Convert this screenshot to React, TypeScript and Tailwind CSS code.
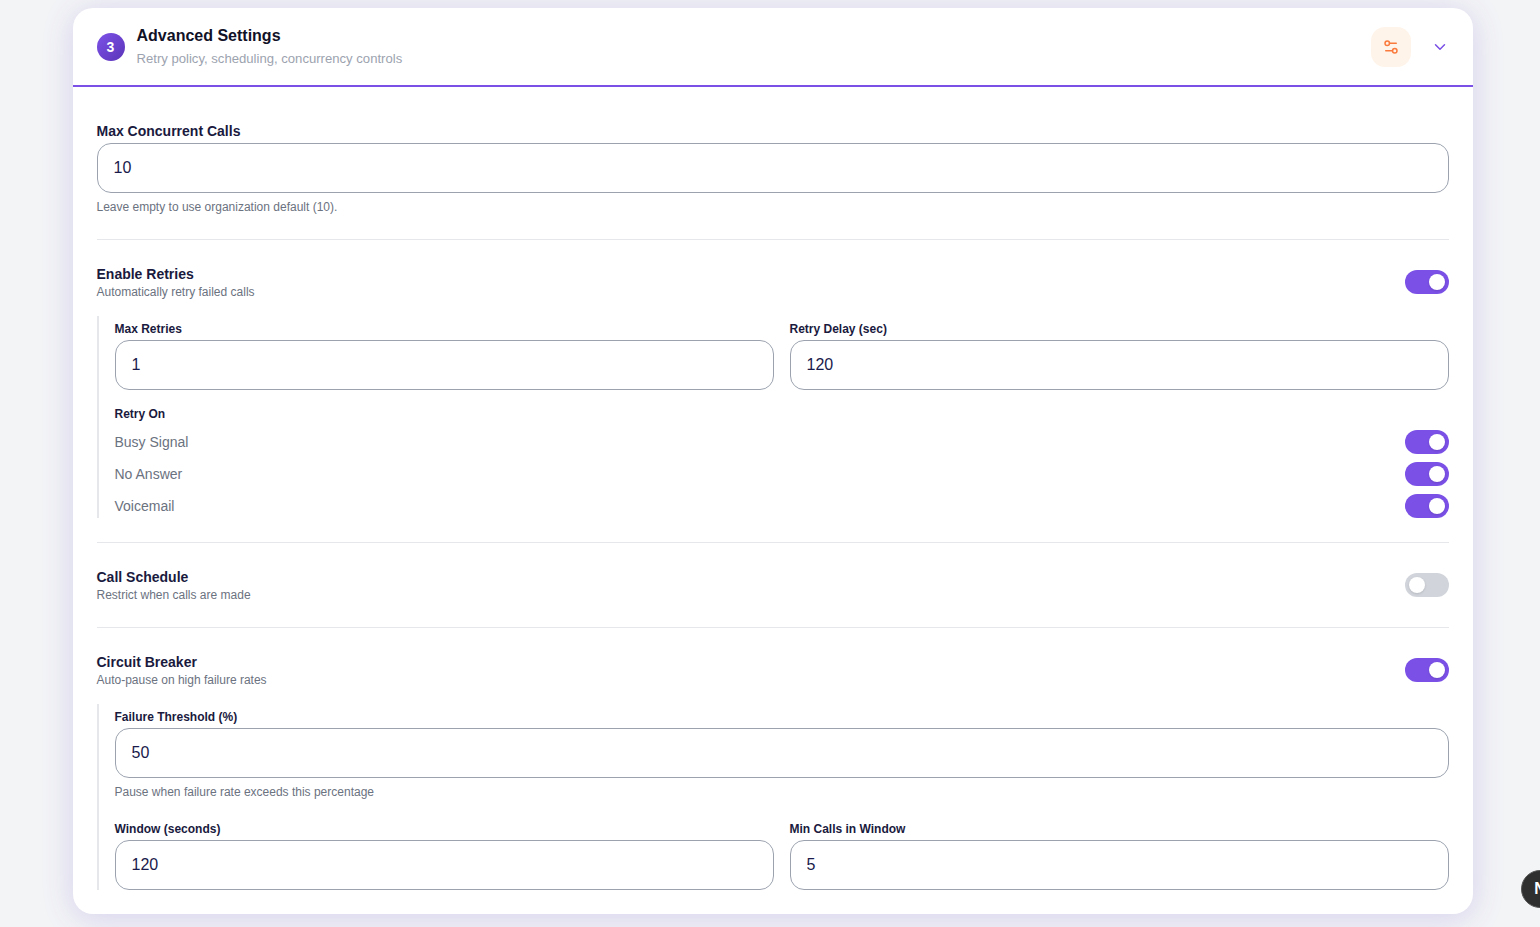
import { ChevronDown, Settings2 } from "lucide-react"

function Toggle({ on = true }: { on?: boolean }) {
  return (
    <button
      type="button"
      className={`flex h-6 w-11 shrink-0 items-center rounded-full px-1 ${on ? "justify-end bg-[#7a50e6]" : "justify-start bg-[#d1d5db]"}`}
    >
      <span className="h-4 w-4 rounded-full bg-white shadow-sm" />
    </button>
  )
}

function NumberInput({ value }: { value: string }) {
  return (
    <input
      defaultValue={value}
      className="block h-[50px] w-full rounded-[14px] border border-[#9ca3af] bg-white px-4 text-base text-[#1a1a4b] outline-none"
    />
  )
}

function SmallField({ label, value }: { label: string; value: string }) {
  return (
    <div>
      <label className="mb-[3px] block text-xs leading-4 font-bold text-[#1a1a3e]">{label}</label>
      <NumberInput value={value} />
    </div>
  )
}

function SectionHead({ title, sub, on }: { title: string; sub: string; on: boolean }) {
  return (
    <div className="flex items-center justify-between">
      <div>
        <div className="text-sm leading-5 font-bold text-[#1a1a3e]">{title}</div>
        <div className="text-xs leading-4 text-[#6b7280]">{sub}</div>
      </div>
      <Toggle on={on} />
    </div>
  )
}

function RetryRow({ label }: { label: string }) {
  return (
    <div className="flex items-center justify-between">
      <span className="text-sm text-[#6b7280]">{label}</span>
      <Toggle />
    </div>
  )
}

export default function App() {
  return (
    <div className="h-[927px] overflow-hidden bg-[#f3f4f6] pt-2 pl-[72.5px] font-['Liberation_Sans',Arial,sans-serif]">
      <div className="w-[1400px] overflow-hidden rounded-[20px] bg-white shadow-[0_4px_32px_rgba(91,63,200,0.2)]">
        <header className="flex h-[79px] items-center justify-between border-b-2 border-[#7a50e6] px-6">
          <div className="flex items-center gap-3">
            <div className="flex h-7 w-7 items-center justify-center rounded-full bg-gradient-to-br from-[#7c52e8] to-[#5b34b8] text-sm font-bold text-white">
              3
            </div>
            <div>
              <div className="mb-0.5 text-base leading-[22px] font-bold text-[#111127]">Advanced Settings</div>
              <div className="text-[13.12px] leading-5 text-[#9ca3af]">Retry policy, scheduling, concurrency controls</div>
            </div>
          </div>
          <div className="flex items-center gap-5">
            <div className="flex h-10 w-10 items-center justify-center rounded-[14px] bg-[#fff4ea]">
              <Settings2 size={18} className="text-[#f97a3c]" />
            </div>
            <ChevronDown size={18} className="text-[#7a50e6]" />
          </div>
        </header>

        <div className="px-6 pt-[34px] pb-6">
          <label className="mb-0.5 block text-sm leading-5 font-bold text-[#1a1a3e]">Max Concurrent Calls</label>
          <NumberInput value="10" />
          <p className="mt-1.5 text-xs leading-4 text-[#6b7280]">Leave empty to use organization default (10).</p>

          <div className="my-6 border-t border-[#e5e7eb]" />

          <SectionHead title="Enable Retries" sub="Automatically retry failed calls" on />
          <div className="mt-4 border-l-2 border-[#e5e7eb] pt-[5px] pl-4">
            <div className="grid grid-cols-2 gap-4">
              <SmallField label="Max Retries" value="1" />
              <SmallField label="Retry Delay (sec)" value="120" />
            </div>
            <div className="mt-4 mb-2 text-xs leading-4 font-bold text-[#1a1a3e]">Retry On</div>
            <div className="flex flex-col gap-2">
              <RetryRow label="Busy Signal" />
              <RetryRow label="No Answer" />
              <RetryRow label="Voicemail" />
            </div>
          </div>

          <div className="my-6 border-t border-[#e5e7eb]" />

          <SectionHead title="Call Schedule" sub="Restrict when calls are made" on={false} />

          <div className="my-6 border-t border-[#e5e7eb]" />

          <SectionHead title="Circuit Breaker" sub="Auto-pause on high failure rates" on />
          <div className="mt-4 border-l-2 border-[#e5e7eb] pt-[5px] pl-4">
            <SmallField label="Failure Threshold (%)" value="50" />
            <p className="mt-1.5 text-xs leading-4 text-[#6b7280]">Pause when failure rate exceeds this percentage</p>
            <div className="mt-[21px] grid grid-cols-2 gap-4">
              <SmallField label="Window (seconds)" value="120" />
              <SmallField label="Min Calls in Window" value="5" />
            </div>
          </div>
        </div>
      </div>

      <div className="fixed top-[870px] left-[1521px] flex h-[38px] w-[38px] items-center justify-center rounded-full border border-[#555] bg-[#2f2f2f] text-base font-bold text-white">
        N
      </div>
    </div>
  )
}
